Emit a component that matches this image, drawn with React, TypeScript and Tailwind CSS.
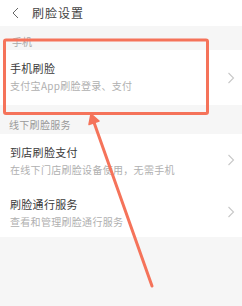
import React from "react";

const font = { fontFamily: '"Noto Sans CJK SC", "Noto Sans", sans-serif' };

function Chevron() {
  return (
    <svg width="8" height="12" viewBox="0 0 8 12" className="shrink-0">
      <path d="M1.5 1 L6.5 6 L1.5 11" fill="none" stroke="#c8c8c8" strokeWidth="1.1" />
    </svg>
  );
}

function Row({ title, sub, h }: { title: string; sub: string; h: string }) {
  return (
    <div className={`bg-white flex items-start pl-[10px] pr-[6px] ${h}`}>
      <div className="flex-1 flex flex-col pt-[11px] gap-[4px]">
        <div className="text-[11px] leading-[14px] text-[#3a3a3a] tracking-[0.3px]">{title}</div>
        <div className="text-[10px] leading-[14px] text-[#b0b0b0] tracking-[0.3px]">{sub}</div>
      </div>
      <div className="self-center pr-[1px]">
        <Chevron />
      </div>
    </div>
  );
}

export default function App() {
  return (
    <div className="relative w-[242px] h-[306px] bg-[#f6f6f6] overflow-hidden" style={font}>
      <div className="h-[26px] bg-white flex items-center pl-[11px] gap-[12px]">
        <svg width="9" height="12" viewBox="0 0 9 12">
          <path d="M7 1 L2 6 L7 11" fill="none" stroke="#666" strokeWidth="1" />
        </svg>
        <span className="text-[12px] text-[#444] tracking-[1px]">刷脸设置</span>
      </div>
      <div className="h-[24px] flex items-end pl-[12px] pb-[1px]">
        <span className="text-[10px] leading-[14px] text-[#aaa]">手机</span>
      </div>
      <Row title="手机刷脸" sub="支付宝App刷脸登录、支付" h="h-[55px]" />
      <div className="h-[29px] flex items-end pl-[9px] pb-[2px]">
        <span className="text-[10px] leading-[14px] text-[#999] tracking-[0.3px]">线下刷脸服务</span>
      </div>
      <Row title="到店刷脸支付" sub="在线下门店刷脸设备使用，无需手机" h="h-[52px]" />
      <Row title="刷脸通行服务" sub="查看和管理刷脸通行服务" h="h-[51px]" />

      <svg className="absolute left-0 top-0 pointer-events-none" width="242" height="306" viewBox="0 0 242 306">
        <rect x="4.5" y="40" width="203" height="73.5" rx="1.5" fill="none" stroke="#f5735a" strokeWidth="3" />
        <line x1="93.5" y1="121" x2="152" y2="286" stroke="#f5735a" strokeWidth="3" strokeLinecap="round" />
        <polygon points="91,114 99,121 89,124.5" fill="#f5735a" stroke="#f5735a" strokeWidth="1.5" strokeLinejoin="round" />
      </svg>
    </div>
  );
}
